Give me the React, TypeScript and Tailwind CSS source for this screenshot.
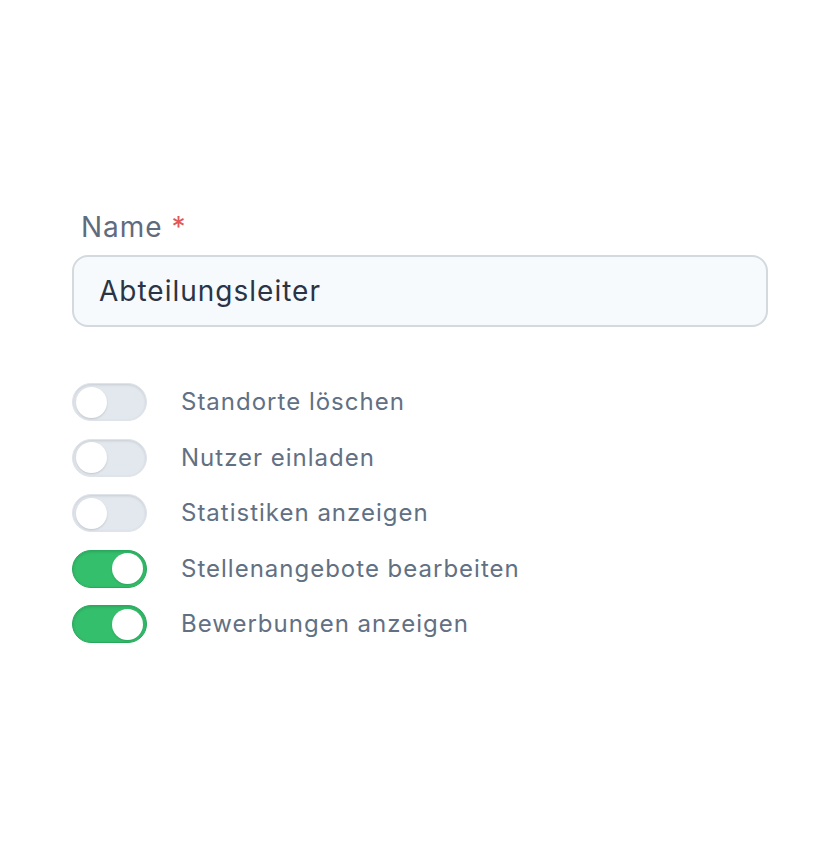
const permissions = [
  { label: "Standorte löschen", enabled: false },
  { label: "Nutzer einladen", enabled: false },
  { label: "Statistiken anzeigen", enabled: false },
  { label: "Stellenangebote bearbeiten", enabled: true },
  { label: "Bewerbungen anzeigen", enabled: true },
];

function Toggle({ enabled }: { enabled: boolean }) {
  return (
    <span
      className={
        enabled
          ? "flex h-[38px] w-[75px] shrink-0 items-center justify-end rounded-full border border-[#2aa85d] bg-[#34bf6c] px-[3px] shadow-[inset_0_1px_3px_rgba(0,0,0,0.15)]"
          : "flex h-[38px] w-[75px] shrink-0 items-center justify-start rounded-full border border-[#dfe3ea] bg-[#e3e8ef] px-[3px] shadow-[inset_0_1px_3px_rgba(0,0,0,0.12)]"
      }
    >
      <span className="h-[31px] w-[31px] rounded-full bg-white shadow-[0_1px_2px_rgba(0,0,0,0.15)]" />
    </span>
  );
}

export default function App() {
  return (
    <div className="min-h-[860px] bg-white font-['Inter',sans-serif] tracking-[1px]">
      <div className="pl-[72px] pr-[72px] pt-[209px]">
        <label className="block pl-[9px] text-[28px] leading-[36px] text-[#5f6b7e]">
          Name <span className="text-[#e25858]">*</span>
        </label>
        <div className="mt-[10px] flex h-[72px] w-[696px] items-center rounded-[16px] border-2 border-[#d3d9df] bg-[#f7fafc] px-[25px]">
          <span className="text-[28px] leading-[36px] text-[#2b3445]">Abteilungsleiter</span>
        </div>

        <ul className="mt-[56px] flex flex-col gap-[17.5px]">
          {permissions.map((permission) => (
            <li key={permission.label} className="flex items-center gap-[34px]">
              <Toggle enabled={permission.enabled} />
              <span className="text-[24px] leading-[32px] text-[#627083]">{permission.label}</span>
            </li>
          ))}
        </ul>
      </div>
    </div>
  );
}
